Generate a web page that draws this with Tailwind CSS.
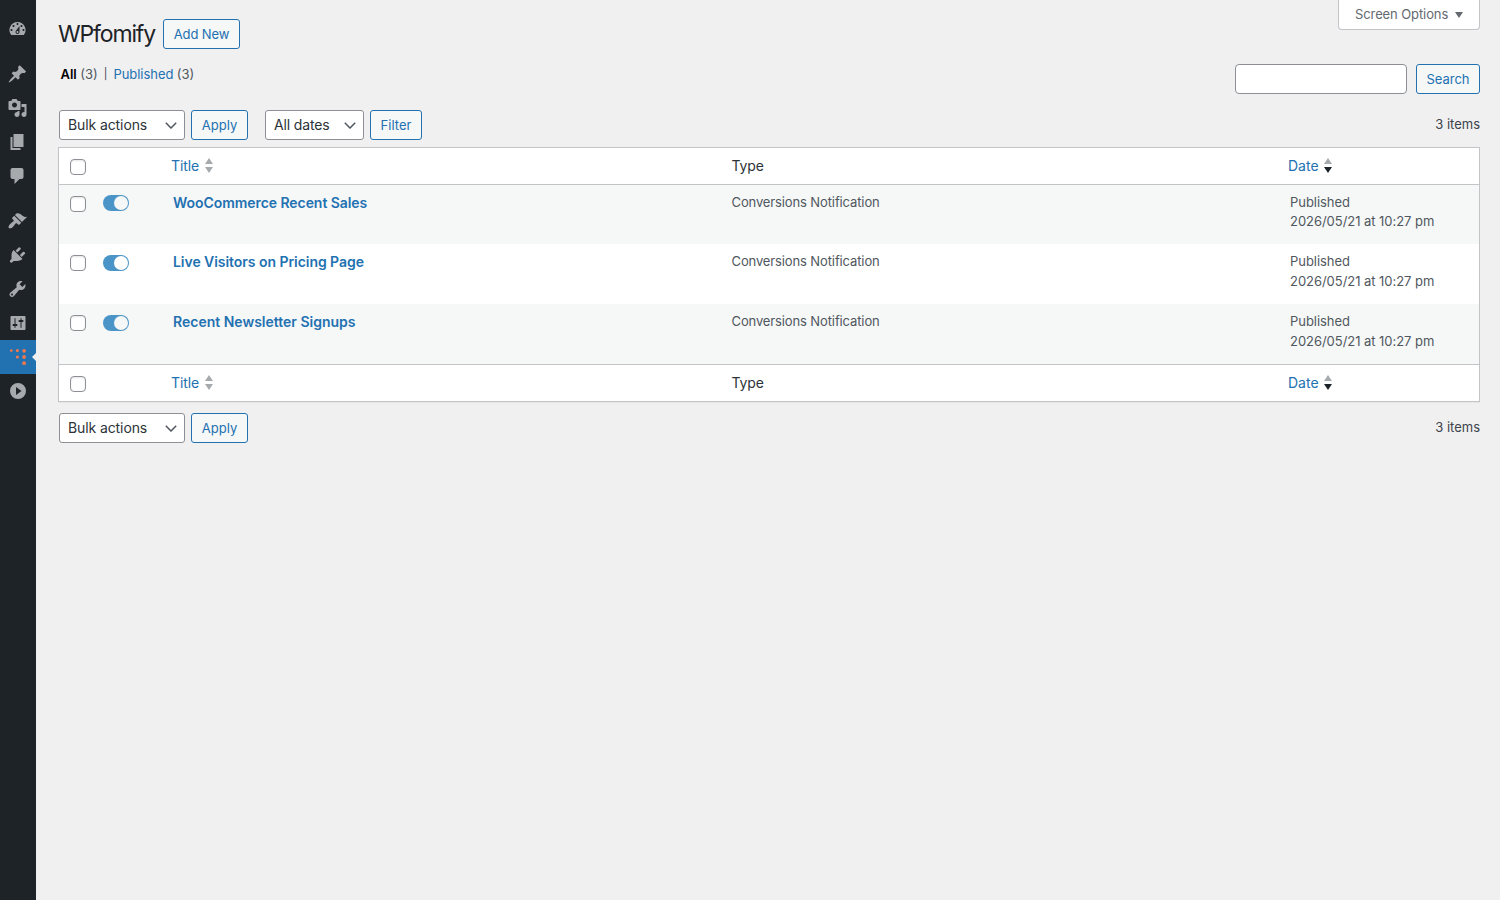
<!DOCTYPE html>
<html lang="en">
<head>
    <meta charset="UTF-8">
    <meta name="viewport" content="width=device-width, initial-scale=1.0">
    <title>WPfomify</title>
    <script src="https://cdn.jsdelivr.net/npm/@tailwindcss/browser@4"></script>
</head>
<body class="flex h-screen overflow-hidden bg-[#f0f0f1] font-['Inter',sans-serif] text-[13px] leading-[19.5px] text-[#3c434a]">
    <!-- Admin menu -->
    <nav class="w-9 shrink-0 bg-[#1d2327] pt-3 text-[#a7aaad]">
        <a href="#" class="flex h-[34px] items-center justify-center pr-0.5">
            <svg class="size-5" viewBox="-0.5 0 20 20" fill="currentColor"><path d="M3.76 16h12.48A7.998 7.998 0 0010 3a7.998 7.998 0 00-6.24 13zM10 4c.55 0 1 .45 1 1s-.45 1-1 1-1-.45-1-1 .45-1 1-1zM6 6c.55 0 1 .45 1 1s-.45 1-1 1-1-.45-1-1 .45-1 1-1zm8 0c.55 0 1 .45 1 1s-.45 1-1 1-1-.45-1-1 .45-1 1-1zm-5.37 5.55L12 7v6c0 1.1-.9 2-2 2s-2-.9-2-2c0-.57.24-1.08.63-1.45zM4 10c.55 0 1 .45 1 1s-.45 1-1 1-1-.45-1-1 .45-1 1-1zm12 0c.55 0 1 .45 1 1s-.45 1-1 1-1-.45-1-1 .45-1 1-1zm-5 3c0-.55-.45-1-1-1s-1 .45-1 1 .45 1 1 1 1-.45 1-1z"/></svg>
        </a>
        <a href="#" class="mt-[11px] flex h-[34px] items-center justify-center pr-0.5">
            <svg class="size-5" viewBox="-0.5 0 20 20" fill="currentColor"><path d="M10.44 3.02l1.82-1.82 6.36 6.35-1.83 1.82c-1.05-.68-2.48-.57-3.41.36l-.75.75c-.92.93-1.04 2.35-.35 3.41l-1.83 1.82-2.41-2.41-2.8 2.79c-.42.42-3.38 2.71-3.8 2.29s1.86-3.39 2.28-3.81l2.79-2.79L4.1 9.36l1.83-1.82c1.05.69 2.48.57 3.4-.36l.75-.75c.93-.92 1.05-2.35.36-3.41z"/></svg>
        </a>
        <a href="#" class="flex h-[34px] items-center justify-center pr-0.5">
            <svg class="size-5" viewBox="-0.5 0 20 20" fill="currentColor"><path d="M13 11V4c0-.55-.45-1-1-1h-1.67L9 1H5L3.67 3H2c-.55 0-1 .45-1 1v7c0 .55.45 1 1 1h10c.55 0 1-.45 1-1zM7 4.5c1.38 0 2.5 1.12 2.5 2.5S8.38 9.5 7 9.5 4.5 8.38 4.5 7 5.62 4.5 7 4.5zM14 6h5v10.5c0 1.38-1.12 2.5-2.5 2.5S14 17.88 14 16.5s1.12-2.5 2.5-2.5c.17 0 .34.02.5.05V9h-3V6zm-4 8.05V13h2v3.5c0 1.38-1.12 2.5-2.5 2.5S7 17.88 7 16.5 8.12 14 9.5 14c.17 0 .34.02.5.05z"/></svg>
        </a>
        <a href="#" class="flex h-[34px] items-center justify-center pr-0.5">
            <svg class="size-5" viewBox="-0.5 0 20 20" fill="currentColor"><path d="M6 15V2h10v13H6zm-1 1h8v2H3V5h2v11z"/></svg>
        </a>
        <a href="#" class="flex h-[34px] items-center justify-center pr-0.5">
            <svg class="size-5" viewBox="-0.5 0 20 20" fill="currentColor"><path d="M5 2h9c1.1 0 2 .9 2 2v7c0 1.1-.9 2-2 2h-2l-5 5v-5H5c-1.1 0-2-.9-2-2V4c0-1.1.9-2 2-2z"/></svg>
        </a>
        <a href="#" class="mt-[11px] flex h-[34px] items-center justify-center pr-0.5">
            <svg class="size-5" viewBox="-0.5 0 20 20" fill="currentColor"><path d="M14.48 11.06L7.41 3.99l1.5-1.5c.5-.56 2.3-.47 3.51.32 1.21.8 1.43 1.28 2.91 2.1 1.18.64 2.45 1.26 4.45.85zm-.71.71L6.7 4.7 4.93 6.47c-.39.39-.39 1.02 0 1.41l1.06 1.06c.39.39.39 1.03 0 1.42-.6.6-1.43 1.11-2.21 1.69-.35.26-.7.53-1.01.84C1.43 14.23.4 16.08 1.4 17.07c.99 1 2.84-.03 4.18-1.36.31-.31.58-.66.85-1.02.57-.78 1.08-1.61 1.69-2.21.39-.39 1.02-.39 1.41 0l1.06 1.06c.39.39 1.02.39 1.41 0z"/></svg>
        </a>
        <a href="#" class="flex h-[34px] items-center justify-center pr-0.5">
            <svg class="size-5" viewBox="-0.5 0 20 20" fill="currentColor"><path d="M13.11 4.36L9.87 7.6 8 5.73l3.24-3.24c.35-.34 1.05-.2 1.56.32.52.51.66 1.21.31 1.55zm-8 1.77l.91-1.12 9.01 9.01-1.19.84c-.71.71-2.63 1.16-3.82 1.16H6.14L4.9 17.26c-.59.59-1.54.59-2.12 0-.59-.58-.59-1.53 0-2.12l1.24-1.24v-3.88c0-1.13.4-3.19 1.09-3.89zm7.26 3.97l3.24-3.24c.34-.35 1.04-.21 1.55.31.52.51.66 1.21.31 1.55l-3.24 3.25z"/></svg>
        </a>
        <a href="#" class="flex h-[34px] items-center justify-center pr-0.5">
            <svg class="size-5" viewBox="-0.5 0 20 20" fill="currentColor"><path d="M16.68 9.77c-1.34 1.34-3.3 1.67-4.95.99l-5.41 6.52c-.99.99-2.59.99-3.58 0s-.99-2.59 0-3.57l6.52-5.42c-.68-1.65-.35-3.61.99-4.95 1.28-1.28 3.12-1.62 4.72-1.06l-2.89 2.89 2.82 2.82 2.86-2.87c.53 1.58.18 3.39-1.08 4.65zM3.81 16.21c.4.39 1.04.39 1.43 0 .4-.4.4-1.04 0-1.43-.39-.4-1.03-.4-1.43 0-.39.39-.39 1.03 0 1.43z"/></svg>
        </a>
        <a href="#" class="flex h-[34px] items-center justify-center pr-0.5">
            <svg class="size-5" viewBox="-0.5 0 20 20" fill="currentColor"><path d="M18 16V4c0-.55-.45-1-1-1H4c-.55 0-1 .45-1 1v12c0 .55.45 1 1 1h13c.55 0 1-.45 1-1zM8 11h1c.55 0 1 .45 1 1s-.45 1-1 1H8v1.5c0 .28-.22.5-.5.5s-.5-.22-.5-.5V13H6c-.55 0-1-.45-1-1s.45-1 1-1h1V5.5c0-.28.22-.5.5-.5s.5.22.5.5V11zm5-2h-1c-.55 0-1-.45-1-1s.45-1 1-1h1V5.5c0-.28.22-.5.5-.5s.5.22.5.5V7h1c.55 0 1 .45 1 1s-.45 1-1 1h-1v5.5c0 .28-.22.5-.5.5s-.5-.22-.5-.5V9z"/></svg>
        </a>
        <!-- Current item -->
        <a href="#" class="relative flex h-[34px] items-center justify-center bg-[#2271b1]">
            <svg class="size-5" viewBox="0 0 20 20" fill="#f0784e">
                <circle cx="3.3" cy="3.6" r="1.4"/><circle cx="9.4" cy="3.6" r="1.6"/><circle cx="16.1" cy="3.8" r="1.9"/>
                <circle cx="9.4" cy="10" r="1.6"/><circle cx="16.1" cy="10" r="1.9"/>
                <circle cx="16.1" cy="16.2" r="1.9"/>
            </svg>
            <span class="absolute top-[13px] right-0 border-y-4 border-r-4 border-y-transparent border-r-[#f0f0f1]"></span>
        </a>
        <a href="#" class="flex h-[34px] items-center justify-center">
            <svg class="size-5" viewBox="0 0 20 20" fill="currentColor" fill-rule="evenodd"><path d="M10 2a8 8 0 1 0 0 16 8 8 0 0 0 0-16zM8 6l5.5 4L8 14z"/></svg>
        </a>
    </nav>

    <main class="flex grow flex-col pr-5 pl-[22px]">
        <div class="flex justify-between">
            <div>
                <div class="flex items-center gap-[9px] pt-[19px]">
                    <h1 class="w-24 text-[23px] leading-[30px] tracking-[-1.15px] text-[#1d2327]">WPfomify</h1>
                    <button class="h-[30px] w-[77px] rounded-[3px] border border-[#2271b1] bg-[#f6f7f7] pt-0.5 tracking-[-0.1px] text-[#2271b1]">Add New</button>
                </div>
                <div class="mt-4 flex pl-0.5">
                    <b class="pl-[0.5px] font-semibold text-black">All</b><span class="ml-[3.5px] text-[#50575e]">(3)</span>
                    <span class="mx-1.5 text-[11px]">|</span>
                    <a href="#" class="tracking-[-0.05px] text-[#2271b1]">Published</a><span class="ml-[3.5px] text-[#50575e]">(3)</span>
                </div>
            </div>
            <div class="flex flex-col items-end">
                <button class="flex h-[30px] w-[142px] items-center rounded-b-[4px] border border-t-0 border-[#c3c4c7] bg-white pl-4 text-[#646970]">
                    <span class="tracking-[-0.1px]">Screen Options</span>
                    <svg class="ml-[7px] h-1.5 w-2" viewBox="0 0 8 6" fill="currentColor"><path d="M0 0h8L4 6z"/></svg>
                </button>
                <div class="mt-[34px] flex gap-[9px]">
                    <input type="search" class="h-[30px] w-[172px] rounded-[4px] border border-[#8c8f94] bg-white px-2">
                    <button class="h-[30px] w-16 rounded-[3px] border border-[#2271b1] bg-[#f6f7f7] pt-0.5 text-[#2271b1]">Search</button>
                </div>
            </div>
        </div>

        <div class="mt-4 flex items-center pl-px">
            <button class="flex h-[30px] w-[126px] items-center justify-between rounded-[3px] border border-[#8c8f94] bg-white pr-[7px] pl-2 text-[14px] tracking-[-0.1px] text-[#2c3338]">
                Bulk actions
                <svg class="h-[7px] w-3" viewBox="0 0 12 7" fill="none" stroke="#50575e" stroke-width="1.5"><path d="M.8.8L6 6 11.2.8"/></svg>
            </button>
            <button class="ml-1.5 h-[30px] w-[57px] rounded-[3px] border border-[#2271b1] bg-[#f6f7f7] pt-0.5 text-[#2271b1]">Apply</button>
            <button class="ml-[17px] flex h-[30px] w-[99px] items-center justify-between rounded-[3px] border border-[#8c8f94] bg-white pr-[7px] pl-2 text-[14px] tracking-[-0.15px] text-[#2c3338]">
                All dates
                <svg class="h-[7px] w-3" viewBox="0 0 12 7" fill="none" stroke="#50575e" stroke-width="1.5"><path d="M.8.8L6 6 11.2.8"/></svg>
            </button>
            <button class="ml-1.5 h-[30px] w-[52px] rounded-[3px] border border-[#2271b1] bg-[#f6f7f7] pt-0.5 text-[#2271b1]">Filter</button>
            <span class="ml-auto">3 items</span>
        </div>

        <!-- List table -->
        <div class="mt-[7px] border border-[#c3c4c7] bg-white shadow-[0_1px_1px_rgba(0,0,0,0.04)]">
            <div class="grid h-[37px] grid-cols-[44px_68px_560.5px_556.5px_1fr] items-center border-b border-[#c3c4c7] text-[14px] tracking-[-0.1px] text-[#2c3338]">
                <span class="mt-0.5 ml-[11px] size-4 rounded-[4px] border border-[#8c8f94] bg-white shadow-[inset_0_1px_2px_rgba(0,0,0,0.1)]"></span>
                <span></span>
                <a href="#" class="flex items-center text-[#2271b1]">Title
                    <svg class="mb-0.5 ml-1.5 h-[15px] w-2" viewBox="0 0 8 15" fill="#a7aaad"><path d="M4 0l4 6H0zM0 9h8l-4 6z"/></svg>
                </a>
                <span>Type</span>
                <a href="#" class="flex items-center tracking-normal text-[#2271b1]">Date
                    <svg class="mb-0.5 ml-[5.5px] h-[15px] w-2" viewBox="0 0 8 15"><path fill="#a7aaad" d="M4 0l4 6H0z"/><path fill="#1d2327" d="M0 9h8l-4 6z"/></svg>
                </a>
            </div>

            <div class="grid h-[59px] grid-cols-[44px_68px_560.5px_556.5px_1fr] items-start bg-[#f6f7f7] pt-2 text-[#50575e]">
                <span class="mt-[3px] ml-[11px] size-4 rounded-[4px] border border-[#8c8f94] bg-white shadow-[inset_0_1px_2px_rgba(0,0,0,0.1)]"></span>
                <span class="mt-0.5 flex h-4 w-[26px] items-center justify-end rounded-full bg-[#4a94c7] pr-px"><span class="size-3.5 rounded-full bg-[#f6f7f7]"></span></span>
                <a href="#" class="pl-0.5 text-[14px] font-semibold tracking-[-0.06px] text-[#2271b1]">WooCommerce Recent Sales</a>
                <span class="tracking-[-0.12px]">Conversions Notification</span>
                <span class="pl-0.5 leading-[19px] tracking-[-0.04px]">Published<br>2026/05/21 at 10:27 pm</span>
            </div>
            <div class="grid h-[60px] grid-cols-[44px_68px_560.5px_556.5px_1fr] items-start pt-2 text-[#50575e]">
                <span class="mt-[3px] ml-[11px] size-4 rounded-[4px] border border-[#8c8f94] bg-white shadow-[inset_0_1px_2px_rgba(0,0,0,0.1)]"></span>
                <span class="mt-[3px] flex h-4 w-[26px] items-center justify-end rounded-full bg-[#4a94c7] pr-px"><span class="size-3.5 rounded-full bg-white"></span></span>
                <a href="#" class="pl-0.5 text-[14px] font-semibold tracking-[-0.05px] text-[#2271b1]">Live Visitors on Pricing Page</a>
                <span class="tracking-[-0.12px]">Conversions Notification</span>
                <span class="pl-0.5 tracking-[-0.04px]">Published<br>2026/05/21 at 10:27 pm</span>
            </div>
            <div class="grid h-[60px] grid-cols-[44px_68px_560.5px_556.5px_1fr] items-start bg-[#f6f7f7] pt-2 text-[#50575e]">
                <span class="mt-[3px] ml-[11px] size-4 rounded-[4px] border border-[#8c8f94] bg-white shadow-[inset_0_1px_2px_rgba(0,0,0,0.1)]"></span>
                <span class="mt-[3px] flex h-4 w-[26px] items-center justify-end rounded-full bg-[#4a94c7] pr-px"><span class="size-3.5 rounded-full bg-[#f6f7f7]"></span></span>
                <a href="#" class="pl-0.5 text-[14px] font-semibold text-[#2271b1]">Recent Newsletter Signups</a>
                <span class="tracking-[-0.12px]">Conversions Notification</span>
                <span class="pl-0.5 tracking-[-0.04px]">Published<br>2026/05/21 at 10:27 pm</span>
            </div>

            <div class="grid h-[37px] grid-cols-[44px_68px_560.5px_556.5px_1fr] items-center border-t border-[#c3c4c7] text-[14px] tracking-[-0.1px] text-[#2c3338]">
                <span class="mt-0.5 ml-[11px] size-4 rounded-[4px] border border-[#8c8f94] bg-white shadow-[inset_0_1px_2px_rgba(0,0,0,0.1)]"></span>
                <span></span>
                <a href="#" class="flex items-center text-[#2271b1]">Title
                    <svg class="mb-0.5 ml-1.5 h-[15px] w-2" viewBox="0 0 8 15" fill="#a7aaad"><path d="M4 0l4 6H0zM0 9h8l-4 6z"/></svg>
                </a>
                <span>Type</span>
                <a href="#" class="flex items-center tracking-normal text-[#2271b1]">Date
                    <svg class="mb-0.5 ml-[5.5px] h-[15px] w-2" viewBox="0 0 8 15"><path fill="#a7aaad" d="M4 0l4 6H0z"/><path fill="#1d2327" d="M0 9h8l-4 6z"/></svg>
                </a>
            </div>
        </div>

        <div class="mt-[11px] flex items-center pl-px">
            <button class="flex h-[30px] w-[126px] items-center justify-between rounded-[3px] border border-[#8c8f94] bg-white pr-[7px] pl-2 text-[14px] tracking-[-0.1px] text-[#2c3338]">
                Bulk actions
                <svg class="h-[7px] w-3" viewBox="0 0 12 7" fill="none" stroke="#50575e" stroke-width="1.5"><path d="M.8.8L6 6 11.2.8"/></svg>
            </button>
            <button class="ml-1.5 h-[30px] w-[57px] rounded-[3px] border border-[#2271b1] bg-[#f6f7f7] pt-0.5 text-[#2271b1]">Apply</button>
            <span class="ml-auto">3 items</span>
        </div>
    </main>
</body>
</html>
